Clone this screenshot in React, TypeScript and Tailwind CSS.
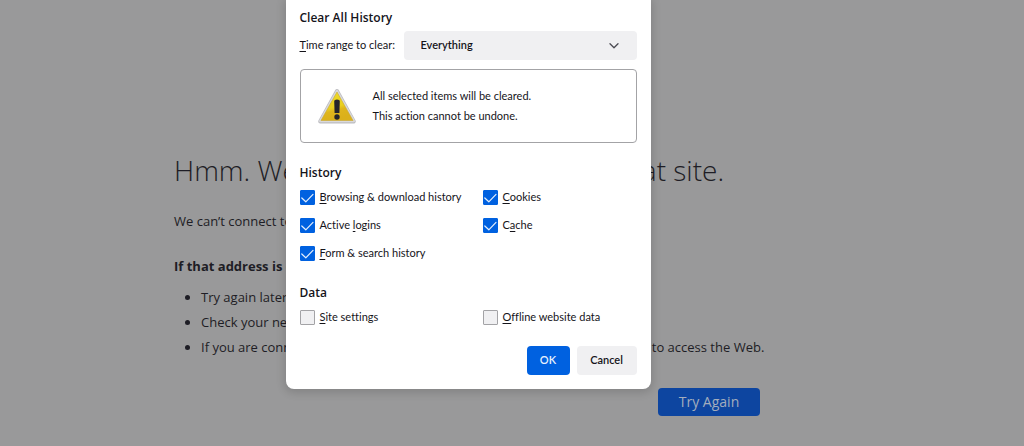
import React from 'react';

interface CheckItemProps {
  id: string;
  before?: string;
  accessKey: string;
  after: string;
  defaultChecked?: boolean;
}

const CheckItem: React.FC<CheckItemProps> = ({ id, before = '', accessKey, after, defaultChecked = false }) => {
  return (
    <div className="flex h-7 items-center gap-[5px]">
      <span className="relative flex size-[15px] shrink-0">
        <input
          id={id}
          type="checkbox"
          defaultChecked={defaultChecked}
          className="peer size-full appearance-none rounded-[1px] border border-[#a3a3a6] bg-[#f0f0f2] checked:border-[#0061e0] checked:bg-[#0061e0]"
        />
        <svg
          viewBox="0 0 15 15"
          className="pointer-events-none absolute inset-0 hidden size-full peer-checked:block"
          fill="none"
          stroke="#e6f0fd"
          strokeWidth="1.2"
          strokeLinecap="round"
          strokeLinejoin="round"
        >
          <path d="M1.8 8 5.8 11.8 13 4.4" />
        </svg>
      </span>
      <label htmlFor={id} className="whitespace-nowrap">
        {before}
        <u className="underline-offset-2">{accessKey}</u>
        {after}
      </label>
    </div>
  );
};

const WarningIcon: React.FC = () => (
  <svg viewBox="0 0 40 37" className="h-[37px] w-10 shrink-0" aria-hidden="true">
    <defs>
      <linearGradient id="warning-fill" x1="0" y1="0" x2="0.3" y2="1">
        <stop offset="0" stopColor="#eedc2a" />
        <stop offset="0.6" stopColor="#e9d020" />
        <stop offset="0.72" stopColor="#dfb51c" />
        <stop offset="1" stopColor="#dbb01a" />
      </linearGradient>
    </defs>
    <path d="M20 3 36.8 33.5H3.2Z" fill="#c4c4c8" stroke="#bdbdc1" strokeWidth="4" strokeLinejoin="round" />
    <path d="M20 3 36.8 33H3.2Z" fill="#d9d9dc" stroke="#d9d9dc" strokeWidth="2.4" strokeLinejoin="round" />
    <path d="M20 4 36 32.5H4Z" fill="url(#warning-fill)" stroke="#c9a832" strokeWidth="0.6" strokeLinejoin="round" />
    <path d="M17.2 13Q17.2 11.5 20 11.5T22.8 13L22.4 25H17.6Z" fill="#25252c" />
    <circle cx="20" cy="29" r="2.7" fill="#25252c" />
  </svg>
);

const ErrorPage: React.FC = () => {
  return (
    <div className="pr-[90px]">
      <main className="mx-auto w-[586px] max-w-full pt-[149px] text-[13px] text-[#1e1d25]">
        <h1 className="text-[28px] leading-[42px] font-light whitespace-nowrap">
          Hmm. We’re having trouble finding that site.
        </h1>
        <p className="mt-5 leading-5">We can’t connect to the server at the address.</p>
        <p className="mt-[25px] leading-5 font-bold">
          If that address is correct, here are three other things you can try:
        </p>
        <ul className="mt-[9px] list-disc pl-[27px] leading-[25px] whitespace-nowrap">
          <li>Try again later.</li>
          <li>Check your network connection.</li>
          <li>If you are connected but behind a firewall, see that Firefox has permission to access the Web.</li>
        </ul>
        <div className="mt-7 flex justify-end">
          <button type="button" className="h-7 w-[102px] rounded-sm bg-[#0d45a0] text-sm text-[#a3adbd]">
            Try Again
          </button>
        </div>
      </main>
    </div>
  );
};

const ClearHistoryDialog: React.FC = () => {
  return (
    <div
      role="dialog"
      aria-labelledby="dialog-title"
      className="w-[365px] rounded-b-lg bg-white px-[14px] pt-[9px] pb-[14px] font-['Lato','Open_Sans',sans-serif] text-[11px] text-[#15141a] shadow-[0_2px_8px_2px_rgba(0,0,0,0.14)] [font-variant-ligatures:none]"
    >
      <h2 id="dialog-title" className="font-['Open_Sans',sans-serif] text-xs leading-[18px] font-semibold">
        Clear All History
      </h2>

      <div className="mt-1 flex items-center justify-between">
        <label htmlFor="time-range" className="whitespace-nowrap">
          <u className="underline-offset-2">T</u>ime range to clear:
        </label>
        <div className="relative w-[233px]">
          <select
            id="time-range"
            className="h-[29px] w-full appearance-none rounded-sm bg-[#f0f0f2] pl-[17px] font-semibold"
          >
            <option>Everything</option>
            <option>Last Hour</option>
            <option>Today</option>
          </select>
          <svg
            viewBox="0 0 10 6"
            className="pointer-events-none absolute top-3 right-[18px] h-1.5 w-2.5"
            fill="none"
            stroke="#4a4a52"
            strokeWidth="1.3"
            strokeLinecap="round"
            strokeLinejoin="round"
          >
            <path d="M1 0.8 5 4.8 9 0.8" />
          </svg>
        </div>
      </div>

      <div className="mt-[9px] flex h-[74px] items-center gap-4 rounded-sm border border-[#a3a3a6] px-4">
        <WarningIcon />
        <p className="leading-5">
          All selected items will be cleared.
          <br />
          This action cannot be undone.
        </p>
      </div>

      <fieldset className="mt-5">
        <legend className="font-['Open_Sans',sans-serif] text-xs leading-5 font-semibold">History</legend>
        <div className="grid grid-cols-[183px_1fr]">
          <CheckItem id="browsing" accessKey="B" after="rowsing & download history" defaultChecked />
          <CheckItem id="cookies" accessKey="C" after="ookies" defaultChecked />
          <CheckItem id="logins" before="Active " accessKey="l" after="ogins" defaultChecked />
          <CheckItem id="cache" before="C" accessKey="a" after="che" defaultChecked />
          <CheckItem id="forms" accessKey="F" after="orm & search history" defaultChecked />
        </div>
      </fieldset>

      <fieldset className="mt-4">
        <legend className="font-['Open_Sans',sans-serif] text-xs leading-5 font-semibold">Data</legend>
        <div className="grid grid-cols-[183px_1fr]">
          <CheckItem id="site-settings" accessKey="S" after="ite settings" />
          <CheckItem id="offline-data" accessKey="O" after="ffline website data" />
        </div>
      </fieldset>

      <div className="mt-[15px] flex justify-end gap-[7px]">
        <button type="button" className="h-[29px] w-[43px] rounded-sm bg-[#0061e0] font-semibold text-[#e6f0fd]">
          OK
        </button>
        <button type="button" className="h-[29px] w-[60px] rounded-sm bg-[#f0f0f2] font-semibold">
          Cancel
        </button>
      </div>
    </div>
  );
};

export default function App() {
  return (
    <div className="relative min-h-screen overflow-hidden bg-[#99999a] font-['Open_Sans','Noto_Sans',sans-serif]">
      <ErrorPage />
      <div className="absolute inset-0 flex items-start justify-center pr-[88px]">
        <ClearHistoryDialog />
      </div>
    </div>
  );
}
